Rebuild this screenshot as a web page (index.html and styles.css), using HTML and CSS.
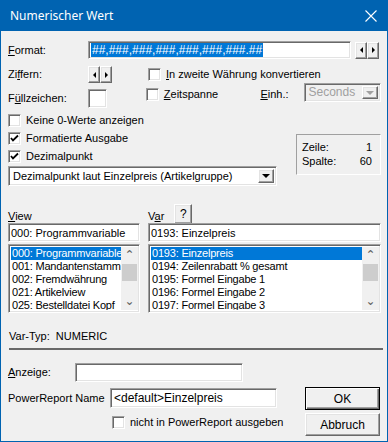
FILE: index.html
```html
<!DOCTYPE html>
<html>
<head lang="de">
    <meta charset="UTF-8">
    <title>Numerischer Wert</title>
    <link rel="stylesheet" href="styles.css">
</head>
<body>
<div id="win">
    <div id="title">
        <span class="caption">Numerischer Wert</span>
        <svg class="close" width="12" height="12" viewBox="0 0 12 12"><path d="M0.5 0.5L11.5 11.5M11.5 0.5L0.5 11.5" stroke="#fff" stroke-width="1.1"/></svg>
    </div>
    <div id="main">
        <div class="row r-format">
            <span class="lbl w80"><u>F</u>ormat:</span>
            <div class="edit format"><span class="sel">##,###,###,###,###,###,###.##</span></div>
            <div class="spin sp-format"><span class="sb"><i class="tri-l"></i></span><span class="sb"><i class="tri-r"></i></span></div>
        </div>
        <div class="row r-ziff">
            <span class="lbl w80">Zi<u>f</u>fern:</span>
            <div class="spin"><span class="sb"><i class="tri-l"></i></span><span class="sb"><i class="tri-r"></i></span></div>
            <label class="chk c-waehr"><span class="box"></span><span><u>I</u>n zweite Währung konvertieren</span></label>
        </div>
        <div class="row r-fuell">
            <span class="lbl w80 l-fuell">F<u>ü</u>llzeichen:</span>
            <div class="edit fuell"></div>
            <label class="chk c-zeit"><span class="box"></span><span><u>Z</u>eitspanne</span></label>
            <span class="lbl l-einh"><u>E</u>inh.:</span>
            <div class="combo dis einh"><span class="ctext">Seconds</span><span class="dd"><i class="tri-d"></i></span></div>
        </div>
        <div class="row r-opts">
            <div class="opts">
                <label class="chk"><span class="box"></span><span>Keine 0-Werte anzeigen</span></label>
                <label class="chk"><span class="box on"><svg width="9" height="9" viewBox="0 0 9 9"><path d="M1 4L3 6.5L8 1.5" fill="none" stroke="#000" stroke-width="1.8"/></svg></span><span>Formatierte Ausgabe</span></label>
                <label class="chk"><span class="box on"><svg width="9" height="9" viewBox="0 0 9 9"><path d="M1 4L3 6.5L8 1.5" fill="none" stroke="#000" stroke-width="1.8"/></svg></span><span>Dezimalpunkt</span></label>
                <div class="combo dez"><span class="ctext">Dezimalpunkt laut Einzelpreis (Artikelgruppe)</span><span class="dd"><i class="tri-d"></i></span></div>
            </div>
            <div class="pos">
                <div class="pline"><span>Zeile:</span><span>1</span></div>
                <div class="pline"><span>Spalte:</span><span>60</span></div>
            </div>
        </div>
        <div class="row r-vars">
            <div class="col c-view">
                <div class="head"><span><u>V</u>iew</span></div>
                <div class="edit field">000: Programmvariable</div>
                <div class="list">
                    <ul>
                        <li class="cur">000: Programmvariable</li>
                        <li>001: Mandantenstamm</li>
                        <li>002: Fremdwährung</li>
                        <li>021: Artikelview</li>
                        <li>025: Bestelldatei Kopf</li>
                    </ul>
                    <div class="scroll"><span class="arr">&#8963;</span><span class="thumb"></span><span class="arr dn">&#8964;</span></div>
                </div>
            </div>
            <div class="col c-var">
                <div class="head"><span>V<u>a</u>r</span><span class="btn qbtn">?</span></div>
                <div class="edit field">0193: Einzelpreis</div>
                <div class="list">
                    <ul>
                        <li class="cur">0193: Einzelpreis</li>
                        <li>0194: Zeilenrabatt % gesamt</li>
                        <li>0195: Formel Eingabe 1</li>
                        <li>0196: Formel Eingabe 2</li>
                        <li>0197: Formel Eingabe 3</li>
                    </ul>
                    <div class="scroll"><span class="arr">&#8963;</span><span class="thumb"></span><span class="arr dn">&#8964;</span></div>
                </div>
            </div>
        </div>
        <div class="vartyp">Var-Typ:&nbsp; NUMERIC</div>
        <div class="sep"></div>
        <div class="row r-bottom">
            <div class="bleft">
                <div class="row r-anz">
                    <span class="lbl w67"><u>A</u>nzeige:</span>
                    <div class="edit anz"></div>
                </div>
                <div class="row r-pr">
                    <span class="lbl w102">PowerReport Name</span>
                    <div class="edit pr">&lt;default&gt;Einzelpreis</div>
                </div>
                <label class="chk c-pr"><span class="box"></span><span>nicht in PowerReport ausgeben</span></label>
            </div>
            <div class="bright">
                <span class="btn big def">OK</span>
                <span class="btn big">Abbruch</span>
            </div>
        </div>
    </div>
</div>
</body>
</html>
```

FILE: styles.css
```css
*{
    margin: 0;
    padding: 0;
    box-sizing: border-box;
}
body{
    width: 388px;
    height: 442px;
    overflow: hidden;
    background: #f0f0f0;
    font-family: "Liberation Sans", Arial, sans-serif;
    font-size: 11px;
    color: #000;
}
u{
    text-decoration: underline;
    text-underline-offset: 1px;
}
ul{
    list-style: none;
}
#win{
    width: 388px;
    height: 442px;
    border: 1px solid #0063b1;
    border-top: none;
    background: #f0f0f0;
}
#title{
    height: 31px;
    margin: 0 -1px;
    background: #0063b1;
    color: #fff;
    display: flex;
    align-items: center;
    justify-content: space-between;
    padding: 0 11px 0 10px;
}
#title .caption{
    font-family: "Noto Sans", sans-serif;
    font-size: 12px;
    margin-top: -1px;
}
#main{
    padding: 10px 6px 0 7px;
}
.row{
    display: flex;
    align-items: flex-start;
}
.lbl{
    line-height: 13px;
}
.w80{ width: 80px; flex: none; }
.w67{ width: 67px; flex: none; }
.w102{ width: 102px; flex: none; }

/* sunken edit */
.edit{
    background: #fff;
    border: 1px solid;
    border-color: #a0a0a0 #fff #fff #a0a0a0;
    box-shadow: inset 1px 1px 0 #696969, inset -1px -1px 0 #e3e3e3;
    padding: 2px 3px;
    line-height: 13px;
    white-space: nowrap;
    overflow: hidden;
}
.btn{
    display: inline-flex;
    align-items: center;
    justify-content: center;
    background: #f0f0f0;
    border: 1px solid;
    border-color: #fff #696969 #696969 #fff;
    box-shadow: inset -1px -1px 0 #a0a0a0, inset 1px 1px 0 #e3e3e3;
}
.spin{
    display: flex;
    flex: none;
}
.sb{
    width: 12px;
    height: 17px;
    display: flex;
    align-items: center;
    justify-content: center;
    background: #f0f0f0;
    border: 1px solid;
    border-color: #fff #696969 #696969 #fff;
    box-shadow: inset -1px -1px 0 #a0a0a0, inset 1px 1px 0 #e3e3e3;
}
.tri-l{
    width: 0;
    height: 0;
    border-top: 3px solid transparent;
    border-bottom: 3px solid transparent;
    border-right: 3px solid #000;
}
.tri-r{
    width: 0;
    height: 0;
    border-top: 3px solid transparent;
    border-bottom: 3px solid transparent;
    border-left: 3px solid #000;
}
.tri-d{
    width: 0;
    height: 0;
    border-left: 4px solid transparent;
    border-right: 4px solid transparent;
    border-top: 4px solid #000;
}

/* format row */
.r-format{
    align-items: center;
}
.format{
    width: 263px;
    height: 18px;
    padding: 1px 2px;
    font-size: 12px;
    line-height: 14px;
}
.sel{
    background: #0078d7;
    color: #fff;
    padding: 0 1px;
}
.sp-format{
    margin-left: 4px;
}
.r-ziff{
    margin-top: 7px;
    align-items: center;
    height: 17px;
}
.r-ziff .spin{
    width: 60px;
}

/* checkbox */
.chk{
    display: flex;
    align-items: center;
    line-height: 13px;
    white-space: nowrap;
}
.box{
    width: 13px;
    height: 13px;
    flex: none;
    background: #fff;
    border: 1px solid;
    border-color: #a0a0a0 #fff #fff #a0a0a0;
    box-shadow: inset 1px 1px 0 #696969, inset -1px -1px 0 #e3e3e3;
    margin-right: 5px;
    display: flex;
    align-items: center;
    justify-content: center;
}
.r-fuell{
    height: 24px;
    margin-top: 2px;
}
.l-fuell{
    margin-top: 7px;
}
.fuell{
    width: 19px;
    height: 19px;
    margin-top: 4px;
}
.c-zeit{
    margin-left: 39px;
    margin-top: 3px;
    width: 117px;
}
.l-einh{
    margin-top: 3px;
    width: 45px;
}
.combo{
    display: flex;
    background: #fff;
    border: 1px solid;
    border-color: #a0a0a0 #fff #fff #a0a0a0;
    box-shadow: inset 1px 1px 0 #696969, inset -1px -1px 0 #e3e3e3;
    padding: 2px;
}
.combo .ctext{
    flex: 1;
    padding-left: 2px;
    line-height: 14px;
    white-space: nowrap;
    overflow: hidden;
}
.combo .dd{
    width: 16px;
    flex: none;
    display: flex;
    align-items: center;
    justify-content: center;
    background: #f0f0f0;
    border: 1px solid;
    border-color: #fff #696969 #696969 #fff;
    box-shadow: inset -1px -1px 0 #a0a0a0, inset 1px 1px 0 #e3e3e3;
}
.einh{
    width: 78px;
    height: 19px;
    margin-top: -2px;
}
.combo.dis{
    background: #f0f0f0;
    color: #a0a0a0;
    font-size: 12px;
}
.combo.dis .ctext{
    line-height: 13px;
    padding-left: 1px;
}
.combo.dis .tri-d{
    border-top-color: #a0a0a0;
}

/* options */
.r-opts{
    margin-top: 2px;
    justify-content: space-between;
}
.opts .chk{
    height: 18px;
}
.dez{
    width: 269px;
    height: 20px;
    margin-top: 1px;
}
.pos{
    width: 85px;
    height: 41px;
    margin-top: 23px;
    border: 1px solid;
    border-color: #a0a0a0 #fff #fff #a0a0a0;
    padding: 5px 8px 0 5px;
}
.pline{
    display: flex;
    justify-content: space-between;
    line-height: 14px;
}

/* view / var */
.r-vars{
    margin-top: 18px;
}
.col{
    display: flex;
    flex-direction: column;
}
.c-view{
    width: 132px;
}
.c-var{
    width: 234px;
    margin-left: 8px;
}
.head{
    height: 19px;
    display: flex;
    align-items: flex-end;
    line-height: 13px;
}
.qbtn{
    width: 18px;
    height: 20px;
    margin-left: 10px;
    margin-bottom: -1px;
    font-size: 12px;
}
.field{
    height: 19px;
    line-height: 14px;
    padding: 2px 2px;
}
.list{
    margin-top: 2px;
    height: 69px;
    display: flex;
    background: #fff;
    border: 1px solid;
    border-color: #a0a0a0 #fff #fff #a0a0a0;
    box-shadow: inset 1px 1px 0 #696969, inset -1px -1px 0 #e3e3e3;
    padding: 2px 1px 2px 2px;
}
.list ul{
    flex: 1;
    min-width: 0;
    overflow: hidden;
}
.list li{
    height: 13px;
    line-height: 13px;
    padding-left: 1px;
    letter-spacing: -0.2px;
    white-space: nowrap;
    overflow: hidden;
}
.list li.cur{
    background: #0078d7;
    color: #fff;
}
.scroll{
    width: 17px;
    flex: none;
    background: #f0f0f0;
    display: flex;
    flex-direction: column;
    align-items: center;
}
.arr{
    height: 17px;
    line-height: 17px;
    color: #606060;
    font-size: 12px;
    font-family: "DejaVu Sans", sans-serif;
}
.arr.dn{
    margin-top: auto;
}
.thumb{
    width: 15px;
    height: 17px;
    background: #cdcdcd;
}
.vartyp{
    margin-top: 17px;
    line-height: 13px;
    padding-left: 1px;
}
.sep{
    height: 2px;
    background: #696969;
    margin: 5px 0 0 1px;
    width: 374px;
}

/* bottom */
.r-bottom{
    justify-content: space-between;
}
.r-anz{
    margin-top: 13px;
    align-items: center;
}
.anz{
    width: 168px;
    height: 19px;
}
.r-pr{
    margin-top: 6px;
    align-items: center;
}
.pr{
    width: 167px;
    height: 20px;
    font-size: 12px;
    line-height: 14px;
}
.c-pr{
    margin-left: 104px;
    margin-top: 8px;
}
.bright{
    display: flex;
    flex-direction: column;
    margin-top: 37px;
    margin-right: 1px;
}
.big{
    width: 75px;
    height: 23px;
    margin-bottom: 3px;
    font-size: 12px;
}
.big.def{
    border-color: #000;
    box-shadow: inset 1px 1px 0 #fff, inset -1px -1px 0 #696969, inset -2px -2px 0 #a0a0a0;
}
```
